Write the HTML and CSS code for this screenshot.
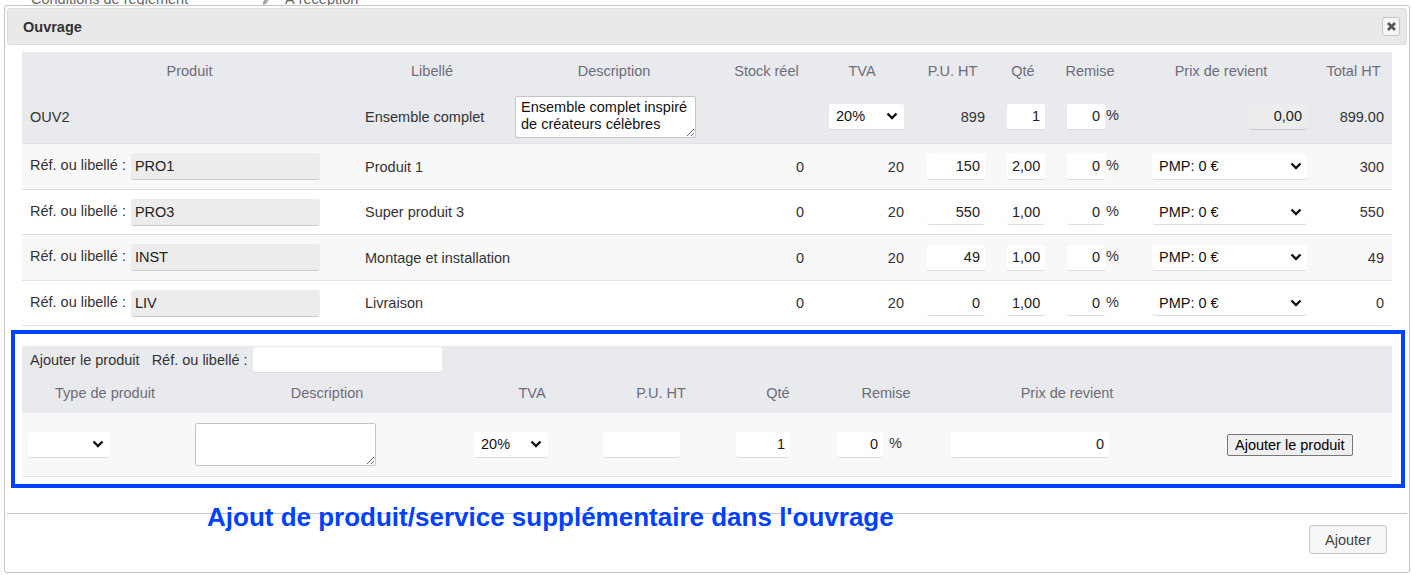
FILE: index.html
```html
<!DOCTYPE html>
<html lang="fr">
<head>
  <meta charset="UTF-8">
  <title>Ouvrage</title>
  <link rel="stylesheet" href="styles.css">
</head>
<body>

  <div class="page">
    <div class="page-line">
      <span class="page-label">Conditions de règlement</span>
      <svg class="pencil" width="10" height="14" viewBox="0 0 10 14"><path d="M7 0l3 3-6 9-3 1 0-3z" fill="#aaa"/></svg>
      <span class="page-value">À réception</span>
    </div>
  </div>

  <div class="dialog">
    <div class="dialog-title">
      <h2>Ouvrage</h2>
      <button class="close" title="Fermer">
        <svg width="9" height="9" viewBox="0 0 9 9"><path d="M1 1l7 7M8 1l-7 7" stroke="#555" stroke-width="2.6"/></svg>
      </button>
    </div>

    <div class="dialog-content">
      <table class="lines">
        <colgroup>
          <col style="width:335px"><col style="width:150px"><col style="width:214px"><col style="width:91px"><col style="width:100px">
          <col style="width:81px"><col style="width:60px"><col style="width:74px"><col style="width:188px"><col style="width:77px">
        </colgroup>
        <tr>
          <th>Produit</th><th>Libellé</th><th>Description</th><th>Stock réel</th><th>TVA</th>
          <th>P.U. HT</th><th>Qté</th><th>Remise</th><th>Prix de revient</th><th>Total HT</th>
        </tr>
        <tr class="parent">
          <td>OUV2</td>
          <td>Ensemble complet</td>
          <td><textarea class="desc">Ensemble complet inspiré de créateurs célèbres</textarea></td>
          <td class="num"></td>
          <td class="num"><span class="select w-tva"><span>20%</span><svg width="12" height="8" viewBox="0 0 12 8"><path d="M1.5 1.5 6 6l4.5-4.5" fill="none" stroke="#111" stroke-width="2.4"/></svg></span></td>
          <td class="num">899</td>
          <td class="num"><input class="field w-qty" value="1"></td>
          <td class="num"><input class="field w-qty" value="0"><span class="pct">%</span></td>
          <td class="num"><input class="field ro w-pu" value="0,00"></td>
          <td class="num">899.00</td>
        </tr>
        <tr class="odd">
          <td>Réf. ou libellé : <input class="field ro ref" value="PRO1"></td>
          <td>Produit 1</td>
          <td></td>
          <td class="num">0</td>
          <td class="num">20</td>
          <td class="num"><input class="field w-pu" value="150"></td>
          <td class="num"><input class="field w-qty" value="2,00"></td>
          <td class="num"><input class="field w-qty" value="0"><span class="pct">%</span></td>
          <td class="num"><span class="select w-pmp"><span>PMP: 0 €</span><svg width="12" height="8" viewBox="0 0 12 8"><path d="M1.5 1.5 6 6l4.5-4.5" fill="none" stroke="#111" stroke-width="2.4"/></svg></span></td>
          <td class="num">300</td>
        </tr>
        <tr>
          <td>Réf. ou libellé : <input class="field ro ref" value="PRO3"></td>
          <td>Super produit 3</td>
          <td></td>
          <td class="num">0</td>
          <td class="num">20</td>
          <td class="num"><input class="field w-pu" value="550"></td>
          <td class="num"><input class="field w-qty" value="1,00"></td>
          <td class="num"><input class="field w-qty" value="0"><span class="pct">%</span></td>
          <td class="num"><span class="select w-pmp"><span>PMP: 0 €</span><svg width="12" height="8" viewBox="0 0 12 8"><path d="M1.5 1.5 6 6l4.5-4.5" fill="none" stroke="#111" stroke-width="2.4"/></svg></span></td>
          <td class="num">550</td>
        </tr>
        <tr class="odd">
          <td>Réf. ou libellé : <input class="field ro ref" value="INST"></td>
          <td>Montage et installation</td>
          <td></td>
          <td class="num">0</td>
          <td class="num">20</td>
          <td class="num"><input class="field w-pu" value="49"></td>
          <td class="num"><input class="field w-qty" value="1,00"></td>
          <td class="num"><input class="field w-qty" value="0"><span class="pct">%</span></td>
          <td class="num"><span class="select w-pmp"><span>PMP: 0 €</span><svg width="12" height="8" viewBox="0 0 12 8"><path d="M1.5 1.5 6 6l4.5-4.5" fill="none" stroke="#111" stroke-width="2.4"/></svg></span></td>
          <td class="num">49</td>
        </tr>
        <tr>
          <td>Réf. ou libellé : <input class="field ro ref" value="LIV"></td>
          <td>Livraison</td>
          <td></td>
          <td class="num">0</td>
          <td class="num">20</td>
          <td class="num"><input class="field w-pu" value="0"></td>
          <td class="num"><input class="field w-qty" value="1,00"></td>
          <td class="num"><input class="field w-qty" value="0"><span class="pct">%</span></td>
          <td class="num"><span class="select w-pmp"><span>PMP: 0 €</span><svg width="12" height="8" viewBox="0 0 12 8"><path d="M1.5 1.5 6 6l4.5-4.5" fill="none" stroke="#111" stroke-width="2.4"/></svg></span></td>
          <td class="num">0</td>
        </tr>
      </table>

      <div class="add-box">
        <table class="add">
          <colgroup>
            <col style="width:166px"><col style="width:278px"><col style="width:132px"><col style="width:126px">
            <col style="width:108px"><col style="width:108px"><col style="width:254px"><col style="width:198px">
          </colgroup>
          <tr class="add-search">
            <td colspan="8">
              <span>Ajouter le produit</span><span class="add-ref">Réf. ou libellé :</span><input class="field search">
            </td>
          </tr>
          <tr>
            <th>Type de produit</th><th>Description</th><th>TVA</th><th>P.U. HT</th>
            <th>Qté</th><th>Remise</th><th>Prix de revient</th><th></th>
          </tr>
          <tr class="add-row">
            <td class="a-type"><span class="select w-type"><span></span><svg width="12" height="8" viewBox="0 0 12 8"><path d="M1.5 1.5 6 6l4.5-4.5" fill="none" stroke="#111" stroke-width="2.4"/></svg></span></td>
            <td class="a-desc"><textarea class="desc tall"></textarea></td>
            <td class="a-tva"><span class="select w-tva2"><span>20%</span><svg width="12" height="8" viewBox="0 0 12 8"><path d="M1.5 1.5 6 6l4.5-4.5" fill="none" stroke="#111" stroke-width="2.4"/></svg></span></td>
            <td class="a-pu"><input class="field a-w-pu"></td>
            <td class="a-qty"><input class="field a-w-qty" value="1"></td>
            <td class="a-rem"><input class="field a-w-rem" value="0"><span class="pct wide">%</span></td>
            <td class="a-pr"><input class="field a-w-pr" value="0"></td>
            <td class="a-btn"><button class="native">Ajouter le produit</button></td>
          </tr>
        </table>
      </div>
    </div>

    <div class="dialog-buttons">
      <button class="btn">Ajouter</button>
    </div>

    <div class="annotation">Ajout de produit/service supplémentaire dans l'ouvrage</div>
  </div>

</body>
</html>
```

FILE: styles.css
```css
body {
  margin: 0;
  background: #fff;
  color: #333;
  font-family: "Liberation Sans", Arial, sans-serif;
  font-size: 14.5px;
}

/* page behind the dialog */
.page {
  height: 575px;
  overflow: hidden;
}
.page-line {
  display: flex;
  align-items: center;
  height: 20px;
  margin-top: -11px;
  color: #666;
}
.page-label {
  margin-left: 31px;
  width: 231px;
}
.pencil {
  margin-right: 13px;
}

/* dialog */
.dialog {
  position: absolute;
  left: 4px;
  top: 5px;
  width: 1406px;
  box-sizing: border-box;
  padding: 2px;
  background: #fff;
  border: 1px solid #c5c5c5;
  border-radius: 3px;
}
.dialog-title {
  display: flex;
  align-items: center;
  justify-content: space-between;
  height: 37px;
  box-sizing: border-box;
  padding: 0 6px 0 15px;
  background: #e9e9e9;
  border: 1px solid #ddd;
  border-radius: 3px;
}
.dialog-title h2 {
  margin: 0;
  font-size: 14.5px;
  font-weight: bold;
  color: #333;
}
.close {
  display: flex;
  align-items: center;
  justify-content: center;
  width: 18px;
  height: 19px;
  padding: 0;
  background: #f6f6f6;
  border: 1px solid #c5c5c5;
  border-radius: 3px;
}
.dialog-content {
  padding: 7px 15px 25px;
}

/* lines table */
table.lines, table.add {
  width: 100%;
  border-collapse: collapse;
  table-layout: fixed;
}
.lines th, .add th {
  height: 38px;
  padding: 0 8px;
  background: #e9eaed;
  color: #6e6c7a;
  font-weight: normal;
  text-align: center;
  white-space: nowrap;
}
.lines td {
  height: 44px;
  padding: 0 8px;
  border-bottom: 1px solid #e2e2e2;
  white-space: nowrap;
}
.lines tr.parent td {
  height: 53px;
  background: #e9eaed;
}
.lines tr.odd td {
  height: 45px;
  background: #f8f8f8;
}
.num {
  text-align: right;
}

/* form controls */
.field {
  height: 26px;
  box-sizing: border-box;
  padding: 0 5px;
  font-family: inherit;
  font-size: 14.5px;
  color: #222;
  text-align: right;
  vertical-align: middle;
  background: #fff;
  border: 0;
  border-bottom: 1px solid #dcdcdc;
  border-radius: 3px;
}
.field.ro {
  background: #ececec;
  border-bottom-color: #cbcbcb;
}
.ref {
  width: 189px;
  height: 27px;
  margin-left: 1px;
  padding-left: 4px;
  text-align: left;
}
.w-pu { width: 58px; }
.w-qty { width: 38px; }
.pct {
  margin-left: 1px;
  color: #333;
}
.pct.wide {
  margin-left: 6px;
}

.select {
  display: inline-flex;
  align-items: center;
  justify-content: space-between;
  height: 26px;
  box-sizing: border-box;
  padding: 0 6px 0 7px;
  color: #111;
  text-align: left;
  vertical-align: middle;
  background: #fff;
  border-bottom: 1px solid #dcdcdc;
  border-radius: 3px;
}
.w-tva { width: 75px; }
.w-pmp { width: 155px; padding-right: 5px; }
.w-type { width: 82px; }
.w-tva2 { width: 74px; }

textarea.desc {
  display: block;
  width: 181px;
  height: 42px;
  box-sizing: border-box;
  padding: 2px 5px;
  font-family: inherit;
  font-size: 14.5px;
  line-height: 17px;
  color: #111;
  background: #fff;
  border: 1px solid #c4c4c4;
  border-radius: 2px;
  overflow: hidden;
}
textarea.tall {
  height: 43px;
}

/* add product block */
.add-box {
  margin: 4px -13px 0 -11px;
  padding: 12px 9px 7px 7px;
  border: 4px solid #0040ff;
}
.add-search td {
  height: 27px;
  padding: 1px 8px 0;
  background: #e9eaed;
  color: #333;
  vertical-align: top;
}
.add-search span {
  display: inline-block;
  line-height: 26px;
}
.add-ref {
  margin-left: 12px;
}
.search {
  width: 189px;
  margin-left: 5px;
  vertical-align: top;
}
.add th {
  height: 38px;
  padding-bottom: 1px;
}
.add-row td {
  height: 63px;
  padding: 0;
  background: #f8f8f8;
  border-bottom: 1px solid #e2e2e2;
  white-space: nowrap;
}
.a-type { padding-left: 6px !important; }
.a-desc { padding-left: 7px !important; }
.a-tva { padding-left: 8px !important; }
.a-pu { padding-left: 5px !important; }
.a-qty { padding-left: 12px !important; }
.a-rem { padding-left: 5px !important; }
.a-pr { padding-left: 11px !important; }
.a-btn { padding-left: 33px !important; }
.a-w-pu { width: 77px; }
.a-w-qty { width: 54px; }
.a-w-rem { width: 46px; }
.a-w-pr { width: 158px; }

button.native {
  height: 22px;
  padding: 0 7px;
  font-family: inherit;
  font-size: 14.5px;
  color: #000;
  background: #efefef;
  border: 1px solid #767676;
  border-radius: 2px;
}

/* bottom buttons */
.dialog-buttons {
  display: flex;
  justify-content: flex-end;
  padding: 11px 20px 16px;
  border-top: 1px solid #c8c8c8;
}
.btn {
  height: 29px;
  padding: 0 15px;
  font-family: inherit;
  font-size: 14.5px;
  color: #444;
  background: #f6f6f6;
  border: 1px solid #c5c5c5;
  border-radius: 3px;
}

.annotation {
  position: absolute;
  left: 202px;
  top: 496px;
  font-size: 26px;
  font-weight: bold;
  line-height: 30px;
  color: #0040ff;
  white-space: nowrap;
}
```
